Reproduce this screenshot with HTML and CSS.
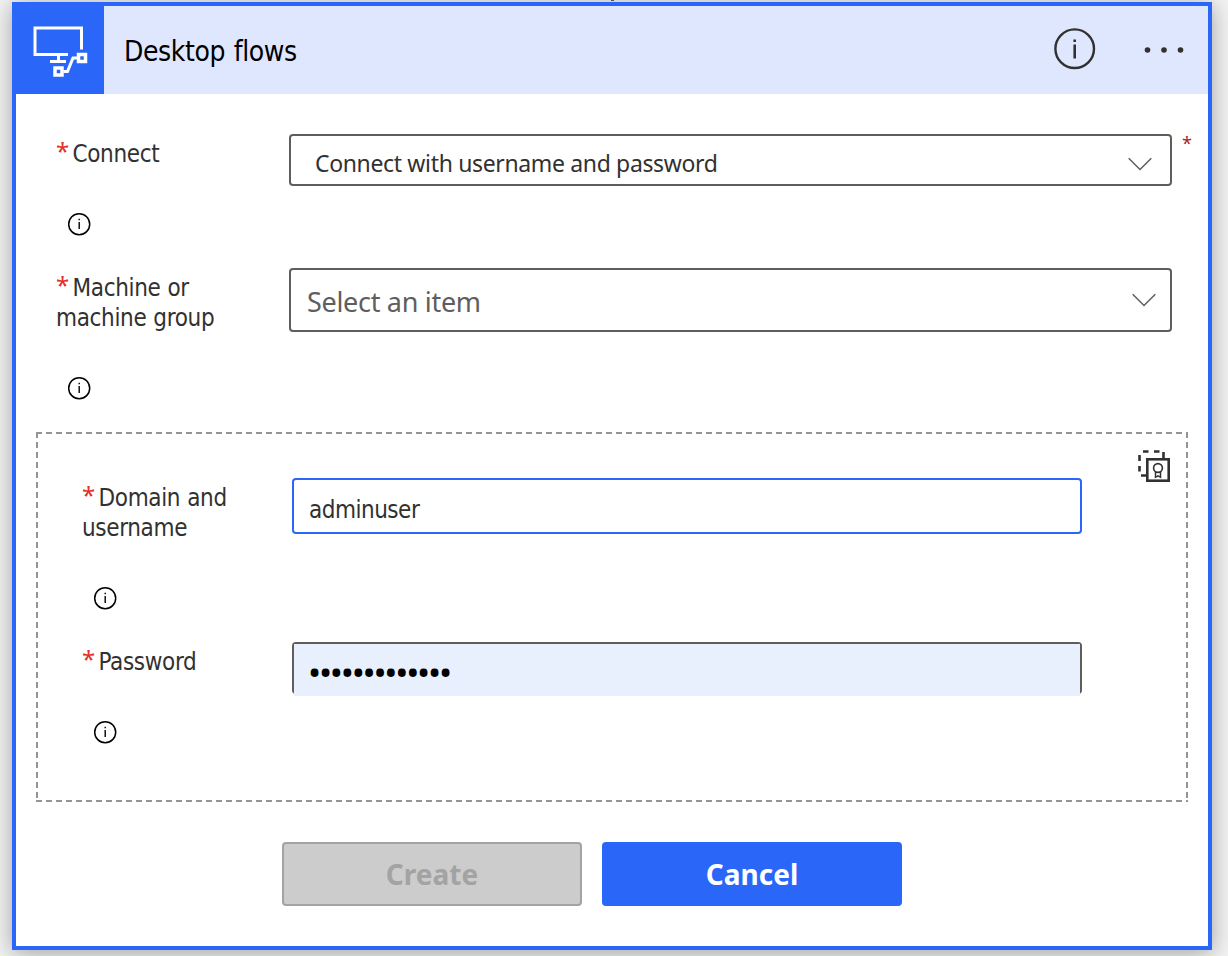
FILE: index.html
```html
<!DOCTYPE html>
<html lang="en">
<head>
<meta charset="utf-8">
<title>Desktop flows</title>
<link rel="stylesheet" href="styles.css">
</head>
<body>
<svg class="symbols" aria-hidden="true">
  <symbol id="info" viewBox="0 0 24 24">
    <circle cx="12.200" cy="12.200" r="10.500" fill="none" stroke="currentColor" stroke-width="1.5"/>
    <path d="M11.500 10h1.4v7h-1.4zM11.500 6.800h1.4v1.4h-1.4z" fill="currentColor"/>
  </symbol>
</svg>
<div class="connector-tip"></div>
<main class="card">
  <header class="card-header">
    <div class="logo">
      <svg width="88" height="88" viewBox="0 0 88 88" fill="none" stroke="#fff">
        <path d="M65.500 43.500V22H19v26.500h33M42.500 50v7M34 55.500h16" stroke-width="3"/>
        <rect x="62.500" y="48.500" width="7" height="7" stroke-width="3.500"/>
        <rect x="39" y="62" width="7" height="7" stroke-width="3.500"/>
        <path d="M47.500 65.500h4l5.500-13.500h5" stroke-width="3"/>
      </svg>
    </div>
    <h1 class="title">Desktop flows</h1>
    <svg class="header-info" viewBox="0 0 42 42">
      <circle cx="20.700" cy="20.700" r="19.300" fill="none" stroke="currentColor" stroke-width="2.400"/>
      <path d="M19.400 16.500h2.600V30.500h-2.600zM19.400 11.500h2.600v2.500h-2.600z" fill="currentColor"/>
    </svg>
    <svg class="more" viewBox="0 0 40 8"><circle cx="3.500" cy="4" r="2.800"/><circle cx="20" cy="4" r="2.800"/><circle cx="36.500" cy="4" r="2.800"/></svg>
  </header>
  <section class="fields">
    <div class="row">
      <div class="label-col">
        <div class="label"><span class="req">*</span>Connect</div>
        <svg class="info"><use href="#info"/></svg>
      </div>
      <div class="select select-small"><span>Connect with username and password</span>
        <svg class="chevron" viewBox="0 0 24 14"><path d="M.7 1.200 12 12.500 23.300 1.200"/></svg>
      </div>
      <span class="side-req">*</span>
    </div>
    <div class="row">
      <div class="label-col">
        <div class="label"><span class="req">*</span>Machine or<br>machine group</div>
        <svg class="info"><use href="#info"/></svg>
      </div>
      <div class="select select-large"><span>Select an item</span>
        <svg class="chevron" viewBox="0 0 24 14"><path d="M.7 1.200 12 12.500 23.300 1.200"/></svg>
      </div>
    </div>
  </section>
  <section class="credentials">
    <svg class="outline" width="1152" height="370"><path d="M0 1H1152M0 369H1152"/><path d="M1 0V370M1151 0V370"/></svg>
    <svg class="credential-icon" viewBox="0 0 32 32" fill="none" stroke="currentColor">
      <path d="M5 1.500h5.500M16 1.500h5.500M25.500 2v6M1.500 5v6M1.500 16v5.500M3 25.500h6" stroke-width="2.600"/>
      <rect x="9.300" y="9.300" width="21.400" height="21.400" stroke-width="2.600"/>
      <circle cx="20" cy="18" r="4.400" stroke-width="1.600"/>
      <path d="M17.500 22v5.300l2.500-1.500 2.500 1.500V22" stroke-width="1.500"/>
    </svg>
    <div class="row">
      <div class="label-col">
        <div class="label"><span class="req">*</span>Domain and<br>username</div>
        <svg class="info"><use href="#info"/></svg>
      </div>
      <div class="input">adminuser</div>
    </div>
    <div class="row">
      <div class="label-col">
        <div class="label"><span class="req">*</span>Password</div>
        <svg class="info"><use href="#info"/></svg>
      </div>
      <div class="password"><div class="fill">•••••••••••••</div></div>
    </div>
  </section>
  <footer class="actions">
    <button class="btn create" disabled>Create</button>
    <button class="btn cancel">Cancel</button>
  </footer>
</main>
</body>
</html>
```
FILE: styles.css
```css
* { box-sizing: border-box; }
body {
  margin: 0;
  height: 956px;
  overflow: hidden;
  padding: 2px 16px 0 12px;
  background: #f3f3f3;
  font-family: "Noto Sans", sans-serif;
  color: #323130;
}
.symbols { position: absolute; width: 0; height: 0; }
.connector-tip {
  position: absolute;
  left: 611px;
  top: 0;
  width: 3px;
  height: 1px;
  background: #555;
}
.card {
  width: 1200px;
  height: 948px;
  border: 4px solid #2a66f8;
  background: #fff;
  box-shadow: 0 3px 22px rgba(0, 0, 0, .34);
}
.card-header {
  display: flex;
  align-items: center;
  height: 88px;
  background: #dfe7ff;
}
.logo { width: 88px; height: 88px; background: #2a66f8; }
.logo svg { display: block; }
.title, .label, .input { font-family: "DejaVu Sans Condensed", "DejaVu Sans", sans-serif; font-stretch: condensed; }
.title {
  flex: 1;
  margin: 0 0 0 20px;
  padding-top: 4px;
  font-size: 28px;
  font-weight: 400;
  line-height: 42px;
  color: #000;
  letter-spacing: -.4px;
  word-spacing: 1px;
}
.header-info { width: 42px; height: 42px; margin: 0 48px 2px 0; }
.more { width: 40px; height: 8px; margin-right: 24px; fill: #323130; }
.fields { padding: 40px 36px 0 40px; }
.row { display: flex; align-items: flex-start; margin-bottom: 32px; }
.label-col { flex: none; width: 233px; padding-top: 5px; }
.label {
  font-size: 24px;
  line-height: 30px;
  letter-spacing: -.35px;
  word-spacing: .5px;
  white-space: nowrap;
}
.req {
  display: inline-block;
  width: 16.5px;
  height: 20px;
  color: #e3302c;
  font-family: "Noto Sans", sans-serif;
  line-height: 20px;
  letter-spacing: 0;
  transform: translateY(-2px);
}
.info { display: block; width: 24px; height: 24px; margin: 43px 0 0 11px; color: #000; }
.select {
  display: flex;
  flex: none;
  justify-content: space-between;
  width: 883px;
  border: 2px solid #605e5c;
  border-radius: 4px;
  white-space: nowrap;
}
.select-small { height: 52px; padding: 0 18px 0 24px; font-size: 23px; line-height: 55px; letter-spacing: -.35px; }
.select-large { height: 64px; padding: 0 14px 0 16px; font-size: 27px; line-height: 63px; letter-spacing: -.3px; color: #605e5c; }
.chevron { width: 24px; height: 14px; margin-top: 21px; fill: none; stroke: #605e5c; stroke-width: 1.5; }
.select-large .chevron { margin-top: 23px; }
.side-req { flex: none; width: 0; margin-left: 10px; font-size: 18px; line-height: 18px; color: #a4262c; }
.credentials {
  position: relative;
  height: 370px;
  margin: 0 20px;
  padding: 46px 0 0 46px;
}
.outline { position: absolute; inset: 0; fill: none; stroke: #949494; stroke-width: 2; stroke-dasharray: 6 4; }
.credential-icon { position: absolute; right: 18px; top: 18px; width: 32px; height: 32px; }
.credentials .label-col { width: 210px; }
.input {
  width: 790px;
  height: 56px;
  padding-left: 15px;
  border: 2px solid #2a66f8;
  border-radius: 4px;
  font-size: 24px;
  line-height: 60px;
  letter-spacing: -.5px;
}
.password {
  width: 790px;
  height: 52px;
  border: 2px solid #605e5c;
  border-bottom: 0;
  border-radius: 4px;
}
.fill {
  height: 52px;
  padding-left: 14px;
  background: #e8f0fe;
  color: #000;
  font-size: 35px;
  line-height: 56px;
  letter-spacing: -2.25px;
}
.actions { display: flex; gap: 20px; padding: 40px 0 0 266px; }
.btn {
  width: 300px;
  height: 64px;
  padding: 0;
  border: 2px solid #2a66f8;
  border-radius: 4px;
  background: #2a66f8;
  color: #fff;
  font: 700 28px/60px "Noto Sans", sans-serif;
}
.create { border-color: #a3a3a3; background: #ccc; color: #a3a3a3; }
```
